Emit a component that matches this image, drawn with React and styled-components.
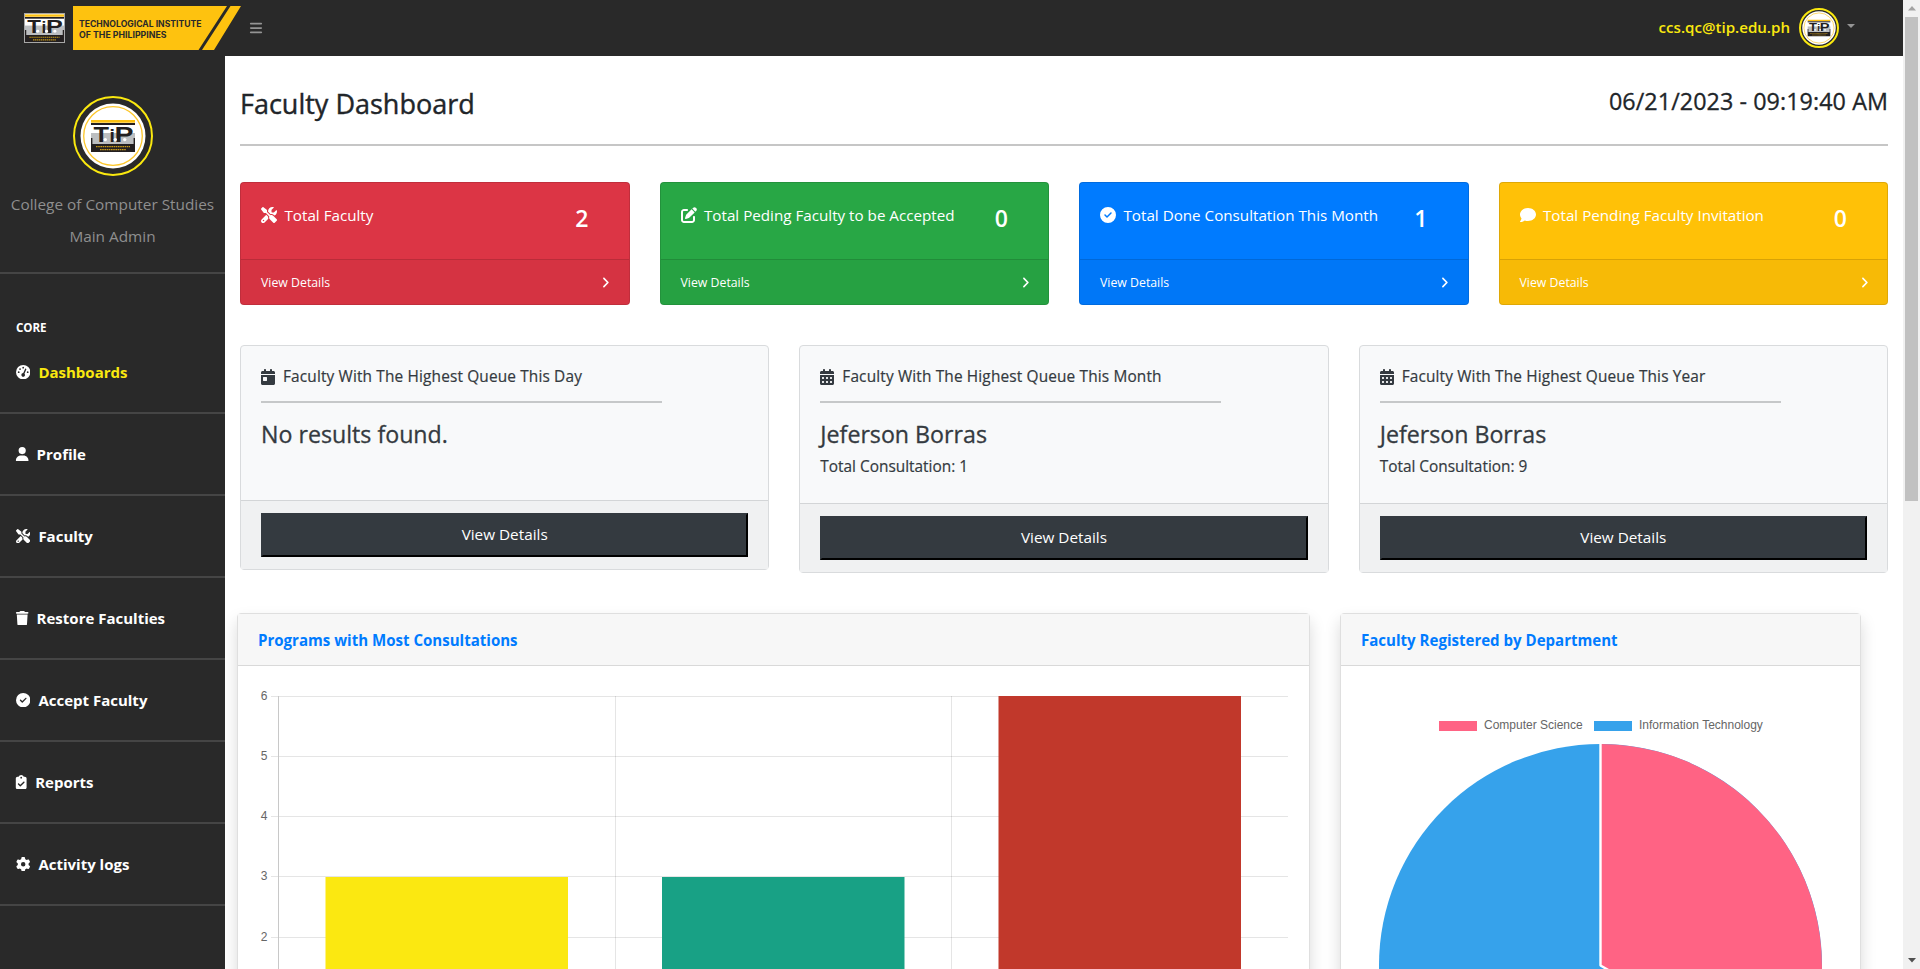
import React from 'react';
import styled, { createGlobalStyle } from 'styled-components';
import {
  FaScrewdriverWrench, FaPenToSquare, FaCircleCheck, FaComment, FaCalendarDay,
  FaCalendarDays, FaAngleRight, FaGaugeHigh, FaUser, FaTrash, FaClipboardCheck, FaGear, FaBars,
} from 'react-icons/fa6';

const GlobalStyle = createGlobalStyle`
  *, *::before, *::after { box-sizing: border-box; }
  body {
    margin: 0;
    overflow: hidden;
    background: #fff;
    color: #212529;
    font-family: 'Open Sans', 'Noto Sans', sans-serif;
    font-size: 15.2px;
    line-height: 24px;
  }
  h1, h2, h3, p { margin: 0; font-weight: 400; }
  svg { display: block; flex: none; }
`;

const Page = styled.div`
  display: flex;
  height: 969px;
  overflow: hidden;
`;
const Shell = styled.div`
  flex: 1;
  min-width: 0;
  display: flex;
  flex-direction: column;
`;

/* Top bar */
const TopBar = styled.header`
  display: flex;
  align-items: center;
  height: 56px;
  flex: none;
  padding: 0 48px 0 24px;
  background: #292929;
`;
const Brand = styled.div`
  display: flex;
  align-items: center;
  gap: 8px;
`;
const MenuButton = styled.div`
  margin-left: 8px;
  color: #949494;
  font-size: 14px;
`;
const Account = styled.div`
  margin-left: auto;
  display: flex;
  align-items: center;
`;
const Email = styled.span`
  color: #fae80f;
  font-size: 15.1px;
  font-weight: 600;
  margin: 0 9px 2px 0;
`;
const Caret = styled.i`
  margin: -4px 0 0 8px;
  border: 4px solid transparent;
  border-top: 4.5px solid #949494;
  border-bottom: 0;
`;
const Avatar = styled.div`
  width: ${(p) => p.$size}px;
  height: ${(p) => p.$size}px;
  padding: ${(p) => p.$pad}px;
  border: 2px solid #fae80f;
  border-radius: 50%;
`;

/* Side navigation */
const Body = styled.div`
  display: flex;
  flex: 1;
  min-height: 0;
`;
const Sidebar = styled.nav`
  width: 225px;
  flex: none;
  background: #292929;
  position: relative;
  z-index: 1;
`;
const ProfileBox = styled.div`
  display: flex;
  flex-direction: column;
  align-items: center;
  height: 218px;
  padding-top: 40px;
  border-bottom: 2px solid #454545;
  color: #8f8f8f;
  font-size: 15.35px;
  line-height: 32px;
  span { white-space: nowrap; }
  ${Avatar} { margin-bottom: 12px; }
`;
const CoreBox = styled.div`
  height: 140px;
  padding: 44.5px 16px 0;
  border-bottom: 2px solid #454545;
`;
const CoreLabel = styled.div`
  color: #fff;
  font-size: 11.6px;
  font-weight: 700;
  line-height: 18px;
  margin-bottom: 23.5px;
  letter-spacing: -0.1px;
`;
const NavLink = styled.div`
  display: flex;
  align-items: center;
  gap: 8px;
  color: ${(p) => (p.$active ? '#fae80f' : '#fff')};
  font-size: 15px;
  font-weight: 700;
  line-height: 24px;
  svg {
    color: #fff;
    width: 14.4px;
    height: 14.4px;
    margin: 0 ${(p) => -(p.$trim || 0)}px;
  }
`;
const NavItem = styled.div`
  height: 82px;
  padding: 28px 16px 0;
  border-bottom: 2px solid #454545;
`;

/* Content */
const Main = styled.main`
  flex: 1;
  min-width: 0;
  padding: 0 15px;
  overflow: hidden;
`;
const TitleRow = styled.div`
  display: flex;
  justify-content: space-between;
  height: 90px;
  padding-top: 30px;
  border-bottom: 2px solid #c6c6c6;
  margin-bottom: 36px;
`;
const Title = styled.h1`
  font-size: 27px;
  line-height: 36px;
  -webkit-text-stroke: 0.4px currentColor;
`;
const Clock = styled.div`
  font-size: 23.3px;
  line-height: 31px;
  letter-spacing: 0.08px;
  -webkit-text-stroke: 0.3px currentColor;
`;
const StatRow = styled.section`
  display: grid;
  grid-template-columns: repeat(4, 1fr);
  gap: 30px;
  margin-bottom: 40px;
`;
const StatCard = styled.article`
  height: 123px;
  border: 1px solid rgba(0, 0, 0, 0.125);
  border-radius: 4px;
  background: ${(p) => p.$bg};
  color: #fff;
  overflow: hidden;
`;
const StatBody = styled.div`
  display: flex;
  height: 76px;
  padding: 20px 40px 0 20px;
  svg { font-size: 16px; margin: 4px 7.5px 0 0; }
`;
const StatValue = styled.span`
  margin-left: auto;
  font-size: 23px;
  font-weight: 600;
  line-height: 30px;
`;
const StatFooter = styled.div`
  display: flex;
  justify-content: space-between;
  align-items: center;
  height: 46px;
  padding: 0 20px;
  border-top: 1px solid rgba(0, 0, 0, 0.125);
  background: rgba(0, 0, 0, 0.03);
  font-size: 12.3px;
  svg { font-size: 13px; margin-right: -3.5px; }
`;
const QueueRow = styled.section`
  display: grid;
  grid-template-columns: repeat(3, 1fr);
  align-items: start;
  gap: 30px;
  height: 268px;
`;
const QueueCard = styled.article`
  border: 1px solid #d9dbdd;
  border-radius: 4px;
  background: #f8f9fa;
  color: #343a40;
`;
const QueueBody = styled.div`
  height: ${(p) => p.$height}px;
  padding: 18.5px 20px 0;
  font-size: 15.4px;
  -webkit-text-stroke: 0.2px currentColor;
`;
const QueueHead = styled.div`
  display: flex;
  align-items: center;
  gap: 8px;
  letter-spacing: 0.15px;
  svg { width: 16px; height: 16px; margin: 0 -1px; }
`;
const QueueRule = styled.div`
  width: 401px;
  height: 2px;
  margin: 12.5px 0 16.5px;
  background: #c6c8c9;
`;
const QueueName = styled.h2`
  font-size: 23.2px;
  line-height: 29px;
  margin-bottom: 6.5px;
  -webkit-text-stroke: 0.3px currentColor;
`;
const QueueFooter = styled.div`
  padding: 12px 20px;
  border-top: 1px solid #d3d5d7;
  background: #f0f1f2;
`;
const DetailButton = styled.div`
  height: 44px;
  line-height: 39px;
  font-size: 15.3px;
  text-align: center;
  background: #343a40;
  color: #fff;
  border: 2px solid;
  border-color: #343a40 #000 #000 #343a40;
`;

/* Charts */
const ChartRow = styled.section`
  display: flex;
  gap: 30px;
  margin-left: -3px;
`;
const ChartCard = styled.article`
  width: ${(p) => p.$width}px;
  flex: none;
  height: 500px;
  border: 1px solid #dfdfdf;
  border-radius: 4px;
  background: #fff;
  box-shadow: 0 8px 16px rgba(0, 0, 0, 0.15);
`;
const ChartHeader = styled.h3`
  height: 52px;
  padding: 0 20px;
  line-height: 52px;
  border-bottom: 1px solid #d9d9d9;
  background: #f7f7f7;
  color: #007bff;
  font-size: 15.05px;
  font-weight: 700;
`;

/* Scroll bar */
const ScrollTrack = styled.aside`
  display: flex;
  flex-direction: column;
  align-items: center;
  width: 17px;
  flex: none;
  background: #f1f1f1;
`;
const ScrollThumb = styled.div`
  width: 13px;
  height: 484px;
  background: #c1c1c1;
`;
const ScrollArrow = styled.div`
  height: 17px;
  display: flex;
  align-items: center;
  margin-top: ${(p) => (p.$end ? 'auto' : 0)};
`;

const TipMark = () => (
  <g>
    <rect width="44" height="2.7" fill="#fcc010" />
    <rect y="3" width="44" height="2" fill="#231f20" />
    <rect y="13" width="44" height="13" fill="#bcbec0" />
    <path d="M0 18H1.4V24H42.6V18H44V32H0Z" fill="#231f20" />
    <g fill="#231f20" fontFamily="Liberation Sans, sans-serif" fontWeight="700" fontSize="22">
      <text x="2.5" y="21.7" textLength="15.5" lengthAdjust="spacingAndGlyphs">T</text>
      <text x="18.6" y="21.7" fontSize="19" textLength="5.4" lengthAdjust="spacingAndGlyphs">i</text>
      <text x="23.6" y="21.7" textLength="19" lengthAdjust="spacingAndGlyphs">P</text>
    </g>
    <g fill="#fff">
      <circle cx="14.3" cy="19.6" r="1.7" />
      <circle cx="24.3" cy="19.6" r="1.7" />
      <circle cx="33.7" cy="19.6" r="1.7" />
    </g>
    <path d="M5 26.6H39M9 29.6H35" stroke="#c79a1b" strokeWidth="1.3" strokeDasharray="1.6 .6" />
  </g>
);

const Seal = () => (
  <svg width="100%" height="100%" viewBox="0 0 66 66">
    <circle cx="33" cy="33" r="32.5" fill="#fff" />
    <circle cx="33" cy="33" r="29.3" fill="none" stroke="#fcc62a" strokeWidth="1.3" />
    <g transform="translate(11 17)"><TipMark /></g>
  </svg>
);

const BrandLogo = () => (
  <Brand>
    <svg width="41" height="30" viewBox="0 0 41 30">
      <rect width="41" height="30" fill="#a7a7a7" />
      <rect x="1" y="1" width="39" height="28" fill="#fff" />
      <g transform="translate(1 1.4) scale(.886 .86)"><TipMark /></g>
    </svg>
    <svg width="168" height="44" viewBox="0 0 168 44">
      <path d="M0 0H154L125.500 44H0ZM157.500 0H168L141 44H129Z" fill="#fec20f" />
      <g fill="#292929" fontFamily="Inter, sans-serif" fontWeight="700" fontSize="8.6">
        <text x="6" y="20.600" textLength="122.500" lengthAdjust="spacingAndGlyphs">TECHNOLOGICAL INSTITUTE</text>
        <text x="6" y="32.200" textLength="87.500" lengthAdjust="spacingAndGlyphs">OF THE PHILIPPINES</text>
      </g>
    </svg>
  </Brand>
);

const BarChart = () => {
  const rows = [[6, 30.5], [5, 90.5], [4, 150.5], [3, 210.5], [2, 271.5]];
  const bars = [[87.5, 211, '#fbe811'], [424, 211, '#18a185'], [760.5, 30, '#c1382b']];
  return (
    <svg width="1070" height="440" viewBox="0 0 1070 440">
      {rows.map(([n, y]) => (
        <g key={n}>
          <path d={`M33 ${y}H1050`} stroke="#e5e5e5" />
          <text x="29.500" y={y + 3.5} textAnchor="end" fill="#666" fontSize="12" fontFamily="Liberation Sans, sans-serif">{n}</text>
        </g>
      ))}
      <path d="M377.500 30V440M713.500 30V440" stroke="#000" strokeOpacity=".1" />
      <path d="M40.500 30V440" stroke="#c8c8c8" />
      {bars.map(([x, y, c]) => <rect key={x} x={x} y={y} width="242.500" height={440 - y} fill={c} />)}
    </svg>
  );
};

const PieChart = () => (
  <svg width="518" height="440" viewBox="0 0 518 440">
    <g fontFamily="Liberation Sans, sans-serif" fontSize="12" fill="#666">
      <rect x="98" y="55" width="38" height="10" fill="#ff6384" />
      <text x="143" y="62.800">Computer Science</text>
      <rect x="253" y="55" width="38" height="10" fill="#36a2eb" />
      <text x="298" y="62.800">Information Technology</text>
    </g>
    <circle cx="259.500" cy="299.500" r="221.500" fill="#36a2eb" />
    <path d="M259.500 299.500V78A221.500 221.500 0 0 1 451.300 410.200Z" fill="#ff6384" />
    <path d="M259.500 77V299.500L451.300 410.200" fill="none" stroke="#fff" strokeWidth="2.4" strokeLinejoin="bevel" />
  </svg>
);

const stats = [
  ['#dc3545', FaScrewdriverWrench, 'Total Faculty', 2],
  ['#28a745', FaPenToSquare, 'Total Peding Faculty to be Accepted', 0],
  ['#007bff', FaCircleCheck, 'Total Done Consultation This Month', 1],
  ['#ffc107', FaComment, 'Total Pending Faculty Invitation', 0],
];
const queues = [
  [FaCalendarDay, 'Faculty With The Highest Queue This Day', 'No results found.', null, 154],
  [FaCalendarDays, 'Faculty With The Highest Queue This Month', 'Jeferson Borras', 'Total Consultation: 1', 157],
  [FaCalendarDays, 'Faculty With The Highest Queue This Year', 'Jeferson Borras', 'Total Consultation: 9', 157],
];
/* icon, label, empty space on each side of a narrow icon */
const links = [
  [FaUser, 'Profile', 0.9], [FaScrewdriverWrench, 'Faculty', 0], [FaTrash, 'Restore Faculties', 0.9],
  [FaCircleCheck, 'Accept Faculty', 0], [FaClipboardCheck, 'Reports', 1.6], [FaGear, 'Activity logs', 0],
];

export default function App() {
  return (
    <Page>
      <GlobalStyle />
      <Shell>
        <TopBar>
          <BrandLogo />
          <MenuButton><FaBars /></MenuButton>
          <Account>
            <Email>ccs.qc@tip.edu.ph</Email>
            <Avatar $size={40} $pad={1}><Seal /></Avatar>
            <Caret />
          </Account>
        </TopBar>
        <Body>
          <Sidebar>
            <ProfileBox>
              <Avatar $size={80} $pad={5}><Seal /></Avatar>
              <span>College of Computer Studies</span>
              <span>Main Admin</span>
            </ProfileBox>
            <CoreBox>
              <CoreLabel>CORE</CoreLabel>
              <NavLink $active><FaGaugeHigh />Dashboards</NavLink>
            </CoreBox>
            {links.map(([Icon, label, trim]) => (
              <NavItem key={label}><NavLink $trim={trim}><Icon />{label}</NavLink></NavItem>
            ))}
          </Sidebar>
          <Main>
            <TitleRow>
              <Title>Faculty Dashboard</Title>
              <Clock>06/21/2023 - 09:19:40 AM</Clock>
            </TitleRow>
            <StatRow>
              {stats.map(([bg, Icon, label, value]) => (
                <StatCard key={label} $bg={bg}>
                  <StatBody><Icon /><span>{label}</span><StatValue>{value}</StatValue></StatBody>
                  <StatFooter>View Details<FaAngleRight /></StatFooter>
                </StatCard>
              ))}
            </StatRow>
            <QueueRow>
              {queues.map(([Icon, head, name, total, height]) => (
                <QueueCard key={head}>
                  <QueueBody $height={height}>
                    <QueueHead><Icon />{head}</QueueHead>
                    <QueueRule />
                    <QueueName>{name}</QueueName>
                    {total && <p>{total}</p>}
                  </QueueBody>
                  <QueueFooter><DetailButton>View Details</DetailButton></QueueFooter>
                </QueueCard>
              ))}
            </QueueRow>
            <ChartRow>
              <ChartCard $width={1073}>
                <ChartHeader>Programs with Most Consultations</ChartHeader>
                <BarChart />
              </ChartCard>
              <ChartCard $width={521}>
                <ChartHeader>Faculty Registered by Department</ChartHeader>
                <PieChart />
              </ChartCard>
            </ChartRow>
          </Main>
        </Body>
      </Shell>
      <ScrollTrack>
        <ScrollArrow><svg width="8" height="5" viewBox="0 0 8 5"><path d="M0 4.500L4 0L8 4.500Z" fill="#a3a3a3" /></svg></ScrollArrow>
        <ScrollThumb />
        <ScrollArrow $end><svg width="8" height="5" viewBox="0 0 8 5"><path d="M0 0L4 4.500L8 0Z" fill="#505050" /></svg></ScrollArrow>
      </ScrollTrack>
    </Page>
  );
}
